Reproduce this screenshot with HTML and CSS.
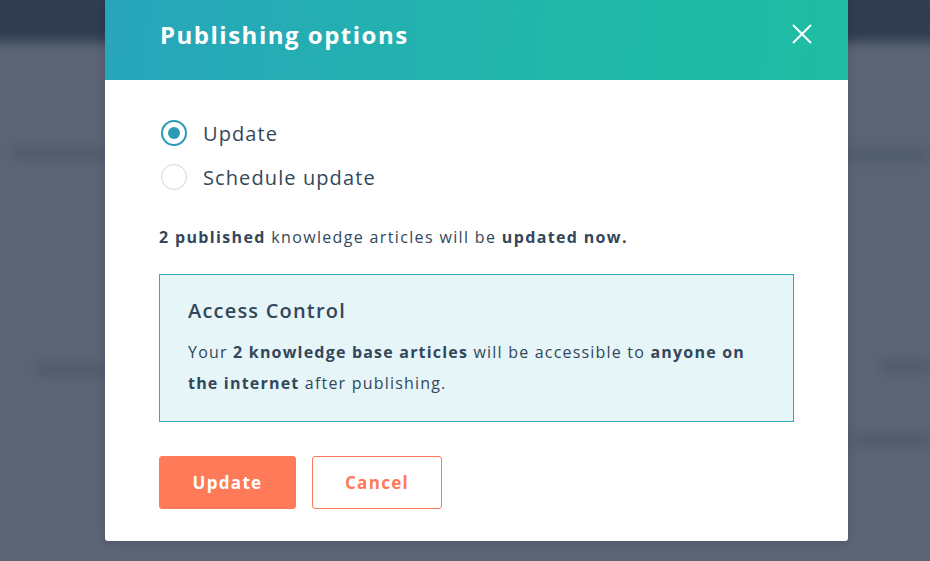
FILE: index.html
```html
<!DOCTYPE html>
<html>
<head>
<meta charset="utf-8">
<link rel="stylesheet" href="styles.css">
</head>
<body>
<div class="page">
  <div class="topbar"></div>
  <div class="bg-content">
    <div class="bg-line l1"></div>
    <div class="bg-line l2"></div>
    <div class="bg-line l3"></div>
    <div class="bg-line l4"></div>
    <div class="bg-line l5"></div>
  </div>
  <div class="modal">
    <div class="modal-header">
      <h1 class="modal-title">Publishing options</h1>
      <button class="close" aria-label="Close">
        <svg width="20" height="20" viewBox="0 0 20 20"><path d="M1 1L19 19M19 1L1 19" stroke="#fff" stroke-width="2" fill="none"/></svg>
      </button>
    </div>
    <div class="modal-body">
      <div class="radios">
        <label class="radio-row"><span class="radio checked"><span class="dot"></span></span><span class="radio-label">Update</span></label>
        <label class="radio-row"><span class="radio"></span><span class="radio-label">Schedule update</span></label>
      </div>
      <p class="summary"><b>2 published</b> knowledge articles will be <b>updated now.</b></p>
      <div class="alert">
        <h2 class="alert-title">Access Control</h2>
        <p class="alert-text">Your <b>2 knowledge base articles</b> will be accessible to <b>anyone on the internet</b> after publishing.</p>
      </div>
      <div class="actions">
        <button class="btn primary">Update</button>
        <button class="btn secondary">Cancel</button>
      </div>
    </div>
  </div>
</div>
</body>
</html>
```
FILE: styles.css
```css
* { box-sizing: border-box; }
html, body { margin: 0; padding: 0; }
body {
  width: 930px;
  height: 561px;
  overflow: hidden;
  font-family: "Open Sans", sans-serif;
  background: #5b6575;
}
.page {
  position: relative;
  width: 930px;
  height: 561px;
  overflow: hidden;
  background: #5b6575;
}
.topbar {
  height: 52px;
  background: #2f3d4f;
  filter: blur(6px);
  margin: -10px -10px 0;
}
.bg-content {
  position: absolute;
  inset: 0;
  filter: blur(6px);
}
.bg-line {
  position: absolute;
  background: #505b6c;
  border-radius: 4px;
  height: 14px;
}
.l1 { left: 10px; top: 146px; width: 95px; }
.l2 { left: 850px; top: 148px; width: 80px; }
.l3 { left: 35px; top: 362px; width: 70px; }
.l4 { left: 880px; top: 360px; width: 50px; }
.l5 { left: 850px; top: 433px; width: 80px; }
.modal {
  position: absolute;
  left: 105px;
  top: 0;
  width: 743px;
  height: 541px;
  background: #fff;
  border-radius: 0 0 3px 3px;
  box-shadow: 0 2px 10px rgba(0,0,0,0.15);
}
.modal-header {
  height: 80px;
  background: linear-gradient(95deg, #28a5bc 0%, #21b7aa 60%, #1fbda3 100%);
  display: flex;
  align-items: center;
  justify-content: space-between;
  padding: 0 36px 12px 55px;
}
.modal-title {
  margin: 0;
  color: #fff;
  font-family: "Open Sans", sans-serif;
  font-weight: 700;
  font-size: 24px;
  letter-spacing: 1.5px;
}
.close {
  background: none;
  border: 0;
  padding: 0;
  width: 20px;
  height: 20px;
  display: flex;
  cursor: pointer;
}
.modal-body {
  padding: 38px 55px 0 54px;
  color: #33475b;
}
.radios {
  display: flex;
  flex-direction: column;
  gap: 14px;
  padding-left: 2px;
}
.radio-row {
  display: flex;
  align-items: center;
  gap: 16px;
  height: 30px;
}
.radio {
  width: 26px;
  height: 26px;
  border-radius: 50%;
  border: 1.5px solid #cbd6e2;
  background: #fff;
  display: flex;
  align-items: center;
  justify-content: center;
}
.radio.checked { border: 2px solid #2c9ab7; }
.dot { width: 12px; height: 12px; border-radius: 50%; background: #2c9ab7; }
.radio-label {
  font-size: 20px;
  letter-spacing: 1.1px;
  color: #33475b;
}
.summary {
  margin: 33px 0 0;
  font-size: 16px;
  letter-spacing: 1.35px;
  line-height: 24px;
}
.summary b, .alert-text b { font-weight: 700; }
.alert {
  margin-top: 25px;
  width: 635px;
  height: 148px;
  background: #e5f5f8;
  border: 1px solid #2fa8c0;
  padding: 22px 28px 0 28px;
}
.alert-title {
  margin: 0;
  font-size: 20px;
  font-weight: 600;
  letter-spacing: 1.2px;
  line-height: 28px;
}
.alert-text {
  margin: 12px 0 0;
  font-size: 16px;
  letter-spacing: 1.2px;
  line-height: 31px;
}
.actions {
  display: flex;
  gap: 16px;
  margin-top: 34px;
}
.btn {
  height: 53px;
  border-radius: 3px;
  font-family: "Open Sans", sans-serif;
  font-size: 17px;
  font-weight: 700;
  letter-spacing: 1.3px;
  cursor: pointer;
}
.primary {
  width: 137px;
  background: #ff7a59;
  border: 1px solid #ff7a59;
  color: #fff;
}
.secondary {
  width: 130px;
  background: #fff;
  border: 1px solid #ff7a59;
  color: #ff7a59;
}
```
